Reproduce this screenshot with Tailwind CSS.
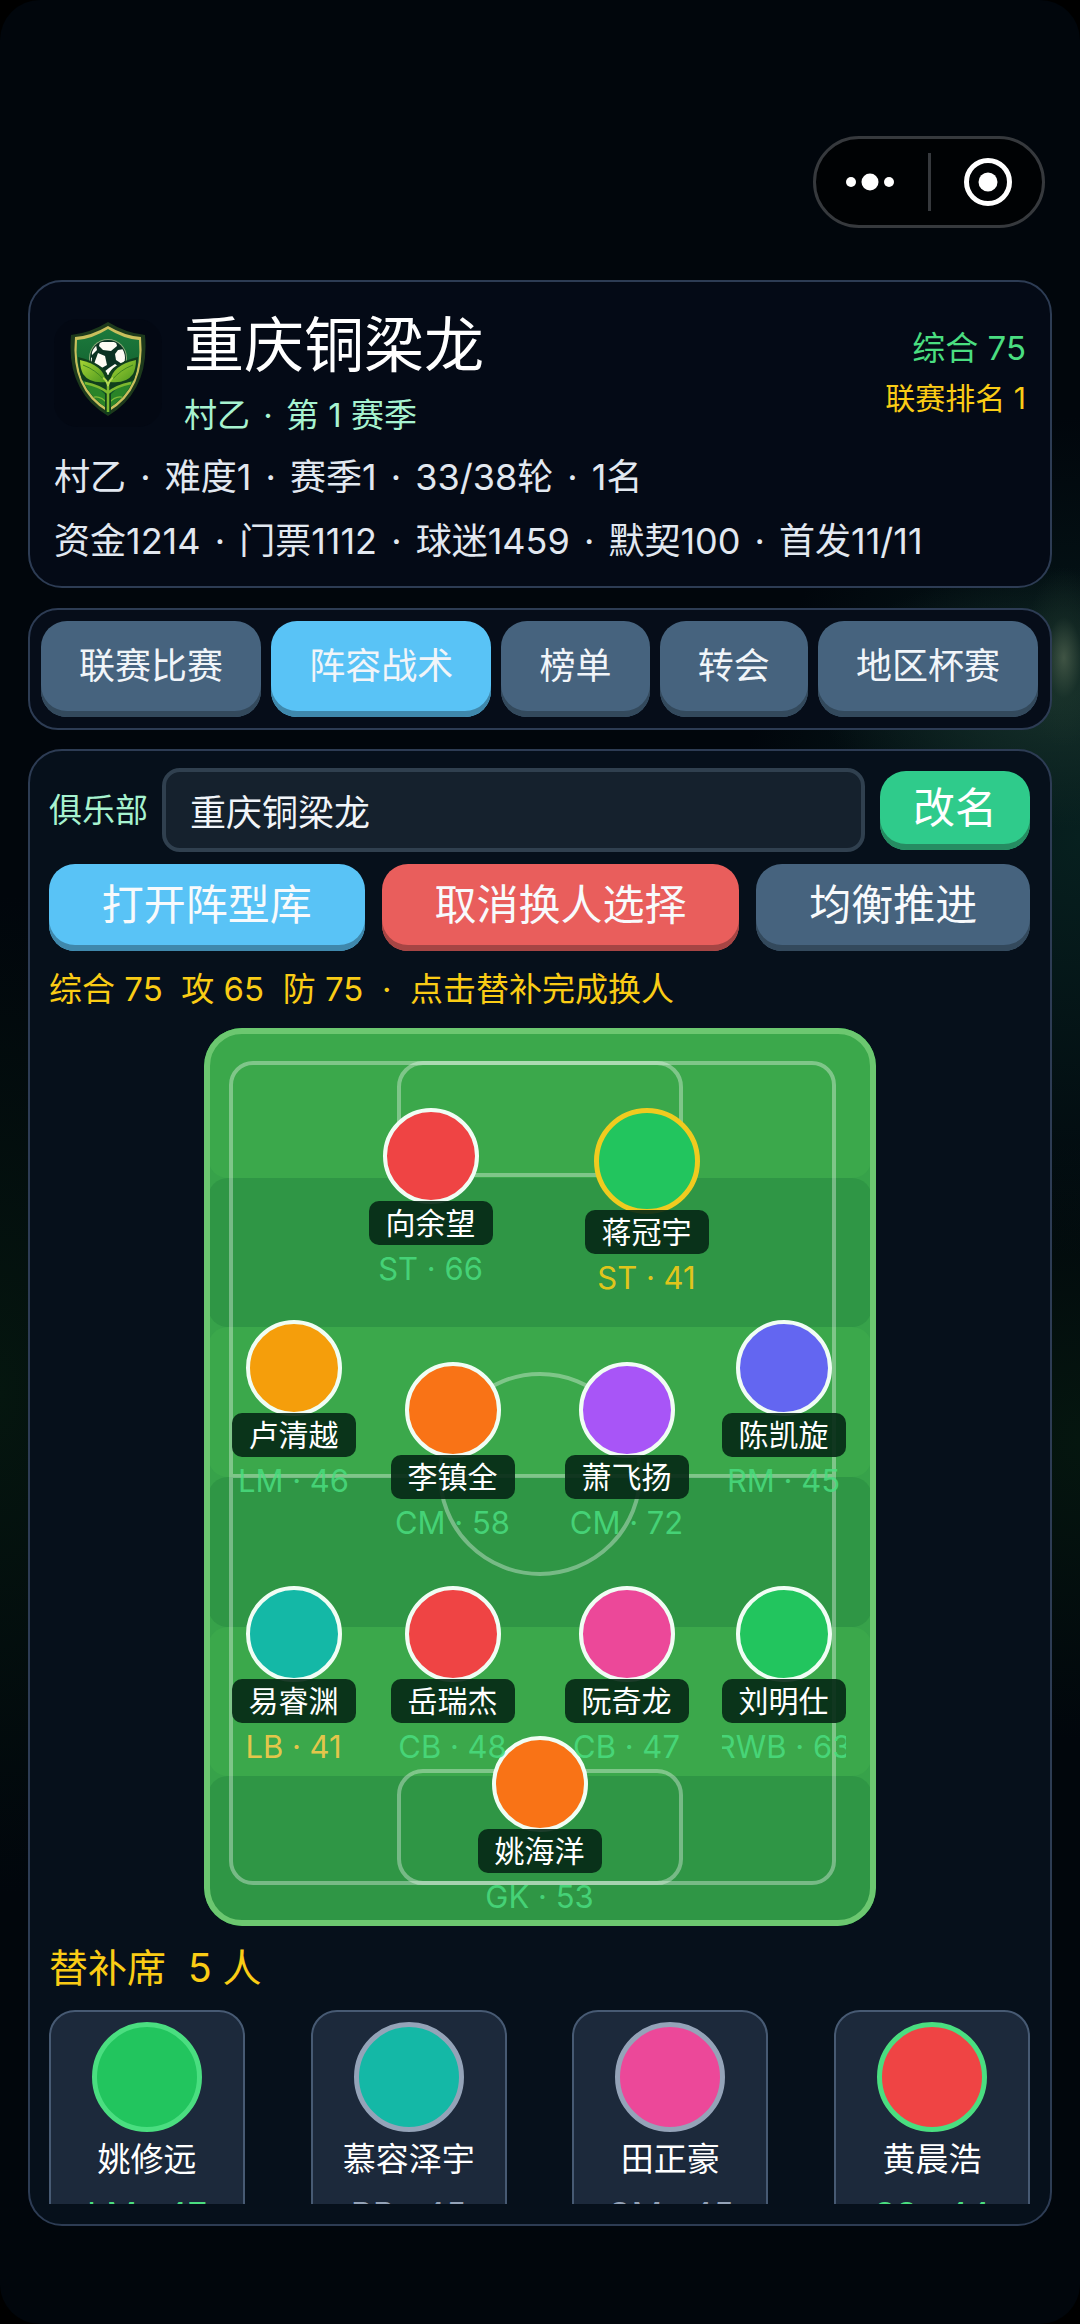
<!DOCTYPE html>
<html lang="zh-CN">
<head>
<meta charset="utf-8">
<meta name="viewport" content="width=device-width, initial-scale=1">
<title>重庆铜梁龙</title>
<script src="https://cdn.jsdelivr.net/npm/@tailwindcss/browser@4"></script>
</head>
<body class="bg-black font-['Inter','Noto_Sans_CJK_SC',sans-serif] text-white">
<div class="flex h-screen flex-col overflow-hidden rounded-[40px] bg-[#01060c] bg-[radial-gradient(ellipse_40px_90px_at_98.5%_28.3%,#4b5f4ccc_0%,#1c332a66_45%,transparent_100%),radial-gradient(ellipse_240px_130px_at_98%_30%,#16302a_0%,transparent_100%),radial-gradient(ellipse_340px_420px_at_100%_36%,#07201f_0%,transparent_100%),radial-gradient(ellipse_240px_500px_at_0%_60%,#05160f_0%,transparent_100%),radial-gradient(ellipse_240px_300px_at_100%_62%,#05160f_0%,transparent_100%)] px-7 pb-[98px]">

  <header class="flex h-[280px] shrink-0 items-start justify-end pt-[136px] pr-[7px]">
    <div class="flex h-[92px] w-[232px] items-center rounded-full border-3 border-[#36393d] bg-black/60">
      <button aria-label="更多" class="flex h-full flex-1 items-center justify-center pr-1">
        <svg class="h-6 w-12" viewBox="0 0 48 24" fill="#fff"><circle cx="5" cy="12" r="5"/><circle cx="24" cy="12" r="8.5"/><circle cx="43" cy="12" r="5"/></svg>
      </button>
      <span class="h-[58px] w-[3px] bg-[#36393d]"></span>
      <button aria-label="关闭" class="flex h-full flex-1 items-center justify-center pl-1">
        <svg class="size-12" viewBox="0 0 48 48"><circle cx="24" cy="24" r="21.5" fill="none" stroke="#fff" stroke-width="5"/><circle cx="24" cy="24" r="9.5" fill="#fff"/></svg>
      </button>
    </div>
  </header>

  <section class="shrink-0 rounded-[34px] border-2 border-[#2d3c54] bg-[#040a16] px-6 pt-[21px] pb-[13px]">
    <div class="mb-0.5 flex items-center">
      <div class="flex size-[108px] items-center justify-center rounded-[24px] bg-[#030813]">
        <svg class="mb-2 h-[94px] w-[76px]" viewBox="0 0 76 94">
          <defs>
            <linearGradient id="shield" x1="0" y1="0" x2="0" y2="1"><stop offset="0" stop-color="#1c7a3c"/><stop offset="1" stop-color="#0d5128"/></linearGradient>
            <linearGradient id="leaf" x1="0" y1="0" x2="1" y2="1"><stop offset="0" stop-color="#a6d434"/><stop offset="1" stop-color="#4c981f"/></linearGradient>
            <clipPath id="ball"><circle cx="38" cy="36" r="17"/></clipPath>
            <clipPath id="inner"><path d="M38 8Q54 17 69 18Q72 66 38 87Q4 66 7 18Q22 17 38 8Z"/></clipPath>
          </defs>
          <path d="M38 0Q56 11 75 13Q80 69 38 94Q-4 69 1 13Q20 11 38 0Z" fill="#1d3a1c"/>
          <path d="M38 4Q55 14 71 15Q76 68 38 90Q0 68 5 15Q21 14 38 4Z" fill="#c9bf5c"/>
          <path d="M38 7Q54 17 69 18Q73 66 38 87Q3 66 7 18Q22 17 38 7Z" fill="url(#shield)"/>
          <g clip-path="url(#inner)">
            <path d="M4 58Q24 58 38 76Q52 58 72 58L60 90H16Z" fill="#2a8428"/>
            <path d="M18 78Q28 70 38 82M58 78Q48 70 38 82" stroke="#7fba37" stroke-width="1.2" fill="none"/>
          </g>
          <circle cx="38" cy="36" r="19" fill="#8fae7c"/><circle cx="38" cy="36" r="18" fill="#0b3222"/>
          <g clip-path="url(#ball)" fill="#fdfbf3">
            <path d="M30 20L46 20L47 24L41 29L33 28L29 24Z"/>
            <path d="M28 31L35 34L37 43L30 47L24 42Z"/>
            <path d="M48 28L54 27L57 36L52 42L46 38L45 32Z"/>
            <path d="M19 34L22 36L22 45L25 50L19 46Z"/>
            <path d="M39 46L45 42L51 46L48 52L40 56L34 50Z"/>
            <path d="M21 27L26 23L27 28L22 33Z"/>
          </g>
          <path d="M35 92V70Q26 64 12 58Q8 46 8 35Q35 42 38 54Q41 42 68 35Q68 46 64 58Q50 64 41 70V92Z" fill="#103f1c"/>
          <path d="M10 38Q34 43 36 60Q20 62 13 52Q10 46 10 38Z" fill="url(#leaf)"/>
          <path d="M66 38Q42 43 40 60Q56 62 63 52Q66 46 66 38Z" fill="url(#leaf)"/>
          <path d="M13 43Q26 48 34 58M63 43Q50 48 42 58" stroke="#3f861f" stroke-width="1" fill="none"/>
          <path d="M38 90V64M38 71Q30 64 15 61M38 71Q46 64 61 61" stroke="#7db82f" stroke-width="2.5" fill="none"/>
          <path d="M33 56Q37 58 38 64Q39 58 43 56" stroke="#b5d952" stroke-width="2" fill="none"/>
        </svg>
      </div>
      <div class="ml-[22px] flex-1">
        <h1 class="text-[60px] leading-[84px]">重庆铜梁龙</h1>
        <p class="text-[33px] leading-[56px] text-[#a7f3d0]">村乙<span class="mx-1"> · </span>第 1 赛季</p>
      </div>
      <div class="text-right leading-[50px]">
        <p class="text-[33px] text-[#4ade80]">综合 75</p>
        <p class="text-[30px] text-[#facc15]">联赛排名 1</p>
      </div>
    </div>
    <p class="text-[36px] leading-[64px] text-[#e2e8f0]">村乙<span class="mx-1"> · </span>难度1<span class="mx-1"> · </span>赛季1<span class="mx-1"> · </span>33/38轮<span class="mx-1"> · </span>1名</p>
    <p class="text-[36px] leading-[64px] text-[#e2e8f0]">资金1214<span class="mx-1"> · </span>门票1112<span class="mx-1"> · </span>球迷1459<span class="mx-1"> · </span>默契100<span class="mx-1"> · </span>首发11/11</p>
  </section>

  <nav class="mt-5 flex shrink-0 gap-[10px] rounded-[30px] border-2 border-[#2d3c54] bg-[#060d19] py-[11px] pr-3 pl-[11px] text-[36px] leading-[90px] text-[#f1f5f9]">
    <button class="flex-auto rounded-[26px] bg-[#46637e] pb-[6px] shadow-[inset_0_-6px_0_#33495c]">联赛比赛</button>
    <button class="flex-auto rounded-[26px] bg-[#59c3f6] pb-[6px] shadow-[inset_0_-6px_0_#3f88ac]">阵容战术</button>
    <button class="flex-auto rounded-[26px] bg-[#46637e] pb-[6px] shadow-[inset_0_-6px_0_#33495c]">榜单</button>
    <button class="flex-auto rounded-[26px] bg-[#46637e] pb-[6px] shadow-[inset_0_-6px_0_#33495c]">转会</button>
    <button class="flex-auto rounded-[26px] bg-[#46637e] pb-[6px] shadow-[inset_0_-6px_0_#33495c]">地区杯赛</button>
  </nav>

  <main class="mt-[19px] flex min-h-0 flex-1 flex-col gap-3 rounded-[34px] border-2 border-[#2d3c54] bg-[#06101b] pt-[17px] pr-5 pb-5 pl-[19px]">
    <form class="flex shrink-0 items-center">
      <label for="club" class="text-[33px] leading-[84px] text-[#a7f3d0]">俱乐部</label>
      <input id="club" type="text" value="重庆铜梁龙" class="ml-[14px] h-[84px] min-w-0 flex-1 rounded-[18px] border-4 border-[#30404f] bg-[#15212d] px-6 text-[36px] text-[#f1f5f9]">
      <button type="button" class="ml-[15px] rounded-[26px] bg-[#2fcb8b] px-[33px] pb-[6px] text-[42px] leading-[73px] shadow-[inset_0_-6px_0_#268c62]">改名</button>
    </form>
    <div class="flex shrink-0 gap-[17px] text-[42px] leading-[81px] text-[#f8fafc]">
      <button class="flex-auto rounded-[26px] bg-[#59c3f6] pb-[6px] shadow-[inset_0_-6px_0_#3f88ac]">打开阵型库</button>
      <button class="flex-auto rounded-[26px] bg-[#e95e5c] pb-[6px] shadow-[inset_0_-6px_0_#a64544]">取消换人选择</button>
      <button class="flex-auto rounded-[26px] bg-[#46637e] pb-[6px] shadow-[inset_0_-6px_0_#33495c]">均衡推进</button>
    </div>
    <p class="shrink-0 text-[33px] leading-[53px] whitespace-pre text-[#facc15]">综合 75  攻 65  防 75  ·  点击替补完成换人</p>

    <div class="relative h-[898px] w-[672px] shrink-0 self-center overflow-hidden rounded-[38px] bg-[#37a24a] leading-[44px]">
      <div class="flex h-full flex-col px-1">
        <div class="flex-1 rounded-[20px] bg-[#3ba84b]"></div>
        <div class="flex-1 rounded-[20px] bg-[#2f9645]"></div>
        <div class="flex-1 rounded-[20px] bg-[#3ba84b]"></div>
        <div class="flex-1 rounded-[20px] bg-[#2f9645]"></div>
        <div class="flex-1 rounded-[20px] bg-[#3ba84b]"></div>
        <div class="flex-1 rounded-[20px] bg-[#2f9645]"></div>
      </div>
      <div class="absolute inset-0 rounded-[38px] border-6 border-[#6cc770]"></div>

      <!-- 球场标线 -->
      <div class="absolute top-[33px] right-[40px] bottom-[41px] left-[25px] rounded-[24px] border-4 border-white/35"></div>
      <div class="absolute top-[33px] left-1/2 h-[116px] w-[286px] -translate-x-1/2 rounded-[26px] border-4 border-white/35"></div>
      <div class="absolute bottom-[41px] left-1/2 h-[116px] w-[286px] -translate-x-1/2 rounded-[26px] border-4 border-white/35"></div>
      <div class="absolute top-[446px] right-[44px] left-[29px] h-1 bg-white/35"></div>
      <div class="absolute top-[344px] left-1/2 size-[204px] -translate-x-1/2 rounded-full border-4 border-white/35"></div>

      <!-- 首发球员 -->
      <div class="absolute top-[708px] left-[274px] flex w-[124px] flex-col items-center">
        <span class="-mb-[3px] size-24 rounded-full border-4 border-[#f0fdf4] bg-[#f97316]"></span>
        <span class="relative w-full rounded-[10px] bg-[#052715]/90 text-center text-[30px]">姚海洋</span>
        <span class="flex w-full justify-center overflow-hidden text-[31px] leading-[48px] whitespace-pre text-[#4ade80]/85">GK · 53</span>
      </div>
      <div class="absolute top-[80px] left-[165px] flex w-[124px] flex-col items-center">
        <span class="-mb-[3px] size-24 rounded-full border-4 border-[#f0fdf4] bg-[#ef4444]"></span>
        <span class="relative w-full rounded-[10px] bg-[#052715]/90 text-center text-[30px]">向余望</span>
        <span class="flex w-full justify-center overflow-hidden text-[31px] leading-[48px] whitespace-pre text-[#4ade80]/85">ST · 66</span>
      </div>
      <div class="absolute top-[80px] left-[381px] flex w-[124px] flex-col items-center">
        <span class="-mb-[4px] size-[106px] rounded-full border-5 border-[#f0cb1f] bg-[#22c55e]"></span>
        <span class="relative w-full rounded-[10px] bg-[#052715]/90 text-center text-[30px]">蒋冠宇</span>
        <span class="flex w-full justify-center overflow-hidden text-[31px] leading-[48px] whitespace-pre text-[#facc15]/90">ST · 41</span>
      </div>
      <div class="absolute top-[292px] left-[28px] flex w-[124px] flex-col items-center">
        <span class="-mb-[3px] size-24 rounded-full border-4 border-[#f0fdf4] bg-[#f59e0b]"></span>
        <span class="relative w-full rounded-[10px] bg-[#052715]/90 text-center text-[30px]">卢清越</span>
        <span class="flex w-full justify-center overflow-hidden text-[31px] leading-[48px] whitespace-pre text-[#4ade80]/85">LM · 46</span>
      </div>
      <div class="absolute top-[334px] left-[187px] flex w-[124px] flex-col items-center">
        <span class="-mb-[3px] size-24 rounded-full border-4 border-[#f0fdf4] bg-[#f97316]"></span>
        <span class="relative w-full rounded-[10px] bg-[#052715]/90 text-center text-[30px]">李镇全</span>
        <span class="flex w-full justify-center overflow-hidden text-[31px] leading-[48px] whitespace-pre text-[#4ade80]/85">CM · 58</span>
      </div>
      <div class="absolute top-[334px] left-[361px] flex w-[124px] flex-col items-center">
        <span class="-mb-[3px] size-24 rounded-full border-4 border-[#f0fdf4] bg-[#a855f7]"></span>
        <span class="relative w-full rounded-[10px] bg-[#052715]/90 text-center text-[30px]">萧飞扬</span>
        <span class="flex w-full justify-center overflow-hidden text-[31px] leading-[48px] whitespace-pre text-[#4ade80]/85">CM · 72</span>
      </div>
      <div class="absolute top-[292px] left-[518px] flex w-[124px] flex-col items-center">
        <span class="-mb-[3px] size-24 rounded-full border-4 border-[#f0fdf4] bg-[#6366f1]"></span>
        <span class="relative w-full rounded-[10px] bg-[#052715]/90 text-center text-[30px]">陈凯旋</span>
        <span class="flex w-full justify-center overflow-hidden text-[31px] leading-[48px] whitespace-pre text-[#4ade80]/85">RM · 45</span>
      </div>
      <div class="absolute top-[558px] left-[28px] flex w-[124px] flex-col items-center">
        <span class="-mb-[3px] size-24 rounded-full border-4 border-[#f0fdf4] bg-[#14b8a6]"></span>
        <span class="relative w-full rounded-[10px] bg-[#052715]/90 text-center text-[30px]">易睿渊</span>
        <span class="flex w-full justify-center overflow-hidden text-[31px] leading-[48px] whitespace-pre text-[#fbcb4c]/90">LB · 41</span>
      </div>
      <div class="absolute top-[558px] left-[187px] flex w-[124px] flex-col items-center">
        <span class="-mb-[3px] size-24 rounded-full border-4 border-[#f0fdf4] bg-[#ef4444]"></span>
        <span class="relative w-full rounded-[10px] bg-[#052715]/90 text-center text-[30px]">岳瑞杰</span>
        <span class="flex w-full justify-center overflow-hidden text-[31px] leading-[48px] whitespace-pre text-[#4ade80]/85">CB · 48</span>
      </div>
      <div class="absolute top-[558px] left-[361px] flex w-[124px] flex-col items-center">
        <span class="-mb-[3px] size-24 rounded-full border-4 border-[#f0fdf4] bg-[#ec4899]"></span>
        <span class="relative w-full rounded-[10px] bg-[#052715]/90 text-center text-[30px]">阮奇龙</span>
        <span class="flex w-full justify-center overflow-hidden text-[31px] leading-[48px] whitespace-pre text-[#4ade80]/85">CB · 47</span>
      </div>
      <div class="absolute top-[558px] left-[518px] flex w-[124px] flex-col items-center">
        <span class="-mb-[3px] size-24 rounded-full border-4 border-[#f0fdf4] bg-[#22c55e]"></span>
        <span class="relative w-full rounded-[10px] bg-[#052715]/90 text-center text-[30px]">刘明仕</span>
        <span class="flex w-full justify-center overflow-hidden text-[31px] leading-[48px] whitespace-pre text-[#4ade80]/85">RWB · 63</span>
      </div>
    </div>

    <h2 class="shrink-0 text-[39px] leading-[60px] whitespace-pre text-[#facc15]">替补席  5 人</h2>

    <div class="flex min-h-0 flex-1 items-start justify-between overflow-hidden text-center text-[33px] leading-[55px]">
      <article class="flex w-[196px] flex-col items-center rounded-[26px] border-2 border-[#475a73] bg-[#1c293b] pt-[10px]">
        <span class="size-[110px] rounded-full border-5 border-[#4ade80] bg-[#22c55e]"></span>
        <h3>姚修远</h3>
        <p class="text-[34px] text-[#4ade80]">LM · 47</p>
      </article>
      <article class="flex w-[196px] flex-col items-center rounded-[26px] border-2 border-[#475a73] bg-[#1c293b] pt-[10px]">
        <span class="size-[110px] rounded-full border-5 border-[#94a3b8] bg-[#14b8a6]"></span>
        <h3>慕容泽宇</h3>
        <p class="text-[34px] text-[#94a3b8]">RB · 45</p>
      </article>
      <article class="flex w-[196px] flex-col items-center rounded-[26px] border-2 border-[#475a73] bg-[#1c293b] pt-[10px]">
        <span class="size-[110px] rounded-full border-5 border-[#94a3b8] bg-[#ec4899]"></span>
        <h3>田正豪</h3>
        <p class="text-[34px] text-[#94a3b8]">CM · 45</p>
      </article>
      <article class="flex w-[196px] flex-col items-center rounded-[26px] border-2 border-[#475a73] bg-[#1c293b] pt-[10px]">
        <span class="size-[110px] rounded-full border-5 border-[#4ade80] bg-[#ef4444]"></span>
        <h3>黄晨浩</h3>
        <p class="text-[34px] text-[#4ade80]">SS · 44</p>
      </article>
    </div>
  </main>
</div>
</body>
</html>
